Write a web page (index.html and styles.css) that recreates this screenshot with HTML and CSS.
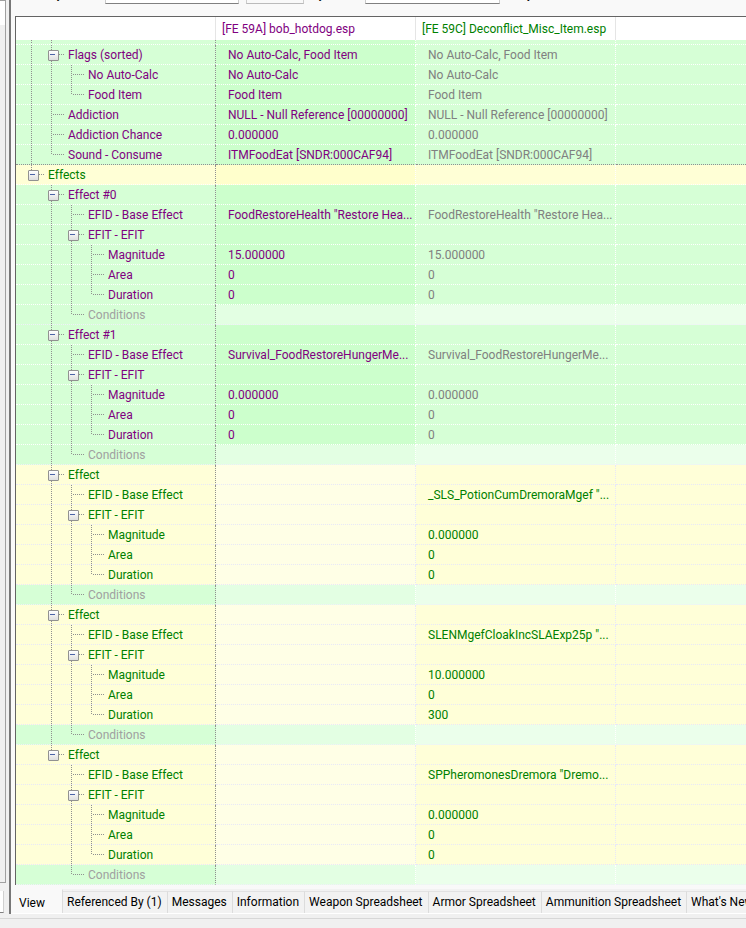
FILE: index.html
```html
<!DOCTYPE html>
<html>
<head>
	<meta charset="utf-8">
	<meta name="viewport" content="width=device-width, initial-scale=1">
	<title>View</title>
	<link rel="stylesheet" href="styles.css">
</head>
<body>
	<div class="window">
		<aside class="side">
			<div class="side_tree"><div class="side_head"></div></div>
			<div class="side_box"></div>
		</aside>
		<main class="main">
			<div class="toolbar">
				<label class="lab1" for="byName">by</label>
				<input class="box1" id="byName" type="text">
				<button class="box2" type="button" aria-label="Name options"></button>
				<label class="lab2" for="byValue">by</label>
				<input class="box3" id="byValue" type="text">
				<span class="lab3">y</span>
			</div>
			<div class="grid">
				<table>
					<colgroup><col class="c"><col class="c"><col class="c"><col></colgroup>
					<thead>
						<tr><th></th><th class="purple">[FE 59A] bob_hotdog.esp</th><th class="green">[FE 59C] Deconflict_Misc_Item.esp</th><th></th></tr>
					</thead>
					<tbody>
						<tr class="same cut"><td><div class="name"><i class="v"></i><i class="v"></i></div></td><td></td><td></td><td></td></tr>
						<tr class="same"><td><div class="name"><i class="v"></i><i class="t box"></i>Flags (sorted)</div></td><td>No Auto-Calc, Food Item</td><td>No Auto-Calc, Food Item</td><td></td></tr>
						<tr class="same"><td><div class="name"><i class="v"></i><i class="v"></i><i class="t"></i>No Auto-Calc</div></td><td>No Auto-Calc</td><td>No Auto-Calc</td><td></td></tr>
						<tr class="same"><td><div class="name"><i class="v"></i><i class="v"></i><i class="l"></i>Food Item</div></td><td>Food Item</td><td>Food Item</td><td></td></tr>
						<tr class="same"><td><div class="name"><i class="v"></i><i class="t"></i>Addiction</div></td><td>NULL - Null Reference [00000000]</td><td>NULL - Null Reference [00000000]</td><td></td></tr>
						<tr class="same"><td><div class="name"><i class="v"></i><i class="t"></i>Addiction Chance</div></td><td>0.000000</td><td>0.000000</td><td></td></tr>
						<tr class="same last"><td><div class="name"><i class="v"></i><i class="l"></i>Sound - Consume</div></td><td>ITMFoodEat [SNDR:000CAF94]</td><td>ITMFoodEat [SNDR:000CAF94]</td><td></td></tr>

						<tr class="group"><td><div class="name"><i class="l box"></i>Effects</div></td><td></td><td></td><td></td></tr>

						<tr class="same"><td><div class="name"><i></i><i class="t box"></i>Effect #0</div></td><td></td><td></td><td></td></tr>
						<tr class="same"><td><div class="name"><i></i><i class="v"></i><i class="t"></i>EFID - Base Effect</div></td><td>FoodRestoreHealth "Restore Hea...</td><td>FoodRestoreHealth "Restore Hea...</td><td></td></tr>
						<tr class="same"><td><div class="name"><i></i><i class="v"></i><i class="t box"></i>EFIT - EFIT</div></td><td></td><td></td><td></td></tr>
						<tr class="same"><td><div class="name"><i></i><i class="v"></i><i class="v"></i><i class="t"></i>Magnitude</div></td><td>15.000000</td><td>15.000000</td><td></td></tr>
						<tr class="same"><td><div class="name"><i></i><i class="v"></i><i class="v"></i><i class="t"></i>Area</div></td><td>0</td><td>0</td><td></td></tr>
						<tr class="same"><td><div class="name"><i></i><i class="v"></i><i class="v"></i><i class="l"></i>Duration</div></td><td>0</td><td>0</td><td></td></tr>
						<tr class="empty"><td><div class="name"><i></i><i class="v"></i><i class="l"></i>Conditions</div></td><td></td><td></td><td></td></tr>

						<tr class="same"><td><div class="name"><i></i><i class="t box"></i>Effect #1</div></td><td></td><td></td><td></td></tr>
						<tr class="same"><td><div class="name"><i></i><i class="v"></i><i class="t"></i>EFID - Base Effect</div></td><td>Survival_FoodRestoreHungerMe...</td><td>Survival_FoodRestoreHungerMe...</td><td></td></tr>
						<tr class="same"><td><div class="name"><i></i><i class="v"></i><i class="t box"></i>EFIT - EFIT</div></td><td></td><td></td><td></td></tr>
						<tr class="same"><td><div class="name"><i></i><i class="v"></i><i class="v"></i><i class="t"></i>Magnitude</div></td><td>0.000000</td><td>0.000000</td><td></td></tr>
						<tr class="same"><td><div class="name"><i></i><i class="v"></i><i class="v"></i><i class="t"></i>Area</div></td><td>0</td><td>0</td><td></td></tr>
						<tr class="same"><td><div class="name"><i></i><i class="v"></i><i class="v"></i><i class="l"></i>Duration</div></td><td>0</td><td>0</td><td></td></tr>
						<tr class="empty"><td><div class="name"><i></i><i class="v"></i><i class="l"></i>Conditions</div></td><td></td><td></td><td></td></tr>

						<tr class="added"><td><div class="name"><i></i><i class="t box"></i>Effect</div></td><td></td><td></td><td></td></tr>
						<tr class="added"><td><div class="name"><i></i><i class="v"></i><i class="t"></i>EFID - Base Effect</div></td><td></td><td>_SLS_PotionCumDremoraMgef "...</td><td></td></tr>
						<tr class="added"><td><div class="name"><i></i><i class="v"></i><i class="t box"></i>EFIT - EFIT</div></td><td></td><td></td><td></td></tr>
						<tr class="added"><td><div class="name"><i></i><i class="v"></i><i class="v"></i><i class="t"></i>Magnitude</div></td><td></td><td>0.000000</td><td></td></tr>
						<tr class="added"><td><div class="name"><i></i><i class="v"></i><i class="v"></i><i class="t"></i>Area</div></td><td></td><td>0</td><td></td></tr>
						<tr class="added"><td><div class="name"><i></i><i class="v"></i><i class="v"></i><i class="l"></i>Duration</div></td><td></td><td>0</td><td></td></tr>
						<tr class="empty"><td><div class="name"><i></i><i class="v"></i><i class="l"></i>Conditions</div></td><td></td><td></td><td></td></tr>

						<tr class="added"><td><div class="name"><i></i><i class="t box"></i>Effect</div></td><td></td><td></td><td></td></tr>
						<tr class="added"><td><div class="name"><i></i><i class="v"></i><i class="t"></i>EFID - Base Effect</div></td><td></td><td>SLENMgefCloakIncSLAExp25p "...</td><td></td></tr>
						<tr class="added"><td><div class="name"><i></i><i class="v"></i><i class="t box"></i>EFIT - EFIT</div></td><td></td><td></td><td></td></tr>
						<tr class="added"><td><div class="name"><i></i><i class="v"></i><i class="v"></i><i class="t"></i>Magnitude</div></td><td></td><td>10.000000</td><td></td></tr>
						<tr class="added"><td><div class="name"><i></i><i class="v"></i><i class="v"></i><i class="t"></i>Area</div></td><td></td><td>0</td><td></td></tr>
						<tr class="added"><td><div class="name"><i></i><i class="v"></i><i class="v"></i><i class="l"></i>Duration</div></td><td></td><td>300</td><td></td></tr>
						<tr class="empty"><td><div class="name"><i></i><i class="v"></i><i class="l"></i>Conditions</div></td><td></td><td></td><td></td></tr>

						<tr class="added"><td><div class="name"><i></i><i class="l box"></i>Effect</div></td><td></td><td></td><td></td></tr>
						<tr class="added"><td><div class="name"><i></i><i></i><i class="t"></i>EFID - Base Effect</div></td><td></td><td>SPPheromonesDremora "Dremo...</td><td></td></tr>
						<tr class="added"><td><div class="name"><i></i><i></i><i class="t box"></i>EFIT - EFIT</div></td><td></td><td></td><td></td></tr>
						<tr class="added"><td><div class="name"><i></i><i></i><i class="v"></i><i class="t"></i>Magnitude</div></td><td></td><td>0.000000</td><td></td></tr>
						<tr class="added"><td><div class="name"><i></i><i></i><i class="v"></i><i class="t"></i>Area</div></td><td></td><td>0</td><td></td></tr>
						<tr class="added"><td><div class="name"><i></i><i></i><i class="v"></i><i class="l"></i>Duration</div></td><td></td><td>0</td><td></td></tr>
						<tr class="empty"><td><div class="name"><i></i><i></i><i class="l"></i>Conditions</div></td><td></td><td></td><td></td></tr>
					</tbody>
				</table>
			</div>
			<nav class="tabs">
				<button type="button" class="active">View</button>
				<button type="button">Referenced By (1)</button>
				<button type="button">Messages</button>
				<button type="button">Information</button>
				<button type="button">Weapon Spreadsheet</button>
				<button type="button">Armor Spreadsheet</button>
				<button type="button">Ammunition Spreadsheet</button>
				<button type="button">What's New</button>
			</nav>
		</main>
	</div>
	<footer class="status"></footer>
</body>
</html>
```
FILE: styles.css
```css
* {
	box-sizing: border-box;
}

html,body {
	height: 100%;
	margin: 0;
	overflow: hidden;
}

body {
	display: flex;
	flex-direction: column;
	background: #f0f0f0;
	font-family: Roboto, "Open Sans", sans-serif;
	font-size: 12px;
	color: #000;
}

button,input {
	font: inherit;
	color: inherit;
	padding: 0;
	margin: 0;
	border-radius: 0;
}

.window {
	flex: 1;
	display: flex;
	min-height: 0;
}

/* left panel, only its right edge is in the window */
.side {
	width: 9px;
	flex: none;
	display: flex;
	flex-direction: column;
	gap: 8px;
	padding-right: 3px;
}
.side_tree {
	flex: 1;
	border-right: 1px solid #a0a0a0;
	border-bottom: 1px solid #a0a0a0;
}
.side_head {
	height: 25px;
	background: #fff;
	border-top: 1px solid #a0a0a0;
}
.side_box {
	height: 22px;
	margin: 0 2px 5px 0;
	background: #fff;
	border-bottom: 1px solid #808080;
	border-right: 1px solid #d0d0d0;
}

.main {
	flex: 1;
	min-width: 0;
	display: flex;
	flex-direction: column;
	background: #f9f9f9;
	border-left: 2px solid #777;
	margin-bottom: 4px;
}

/* toolbar is scrolled up, the lower edge of the fields stays visible */
.toolbar {
	display: flex;
	height: 34px;
	margin-top: -18px;
	padding-left: 39px;
	line-height: 24px;
	flex: none;
	overflow: hidden;
}
.toolbar input,.toolbar button {
	height: 22px;
	background: #fff;
	border: 1px solid #ccc;
	border-bottom-color: #808080;
}
.lab1 { width: 55px; }
.box1 { width: 134px; }
.toolbar .box2 {
	width: 58px;
	margin-left: 7px;
	background: #f9f9f9;
	border-bottom-color: #bbb;
}
.lab2 {
	width: 53px;
	margin-left: 8px;
	flex: none;
}
.box3 { width: 135px; }
.lab3 { margin-left: 27px; }

.grid {
	flex: 1;
	min-height: 0;
	overflow: hidden;
	margin-left: 4px;
	border-top: 1px solid #646464;
}

table {
	width: 100%;
	table-layout: fixed;
	border-spacing: 0;
	border-left: 1px solid #646464;
	background: #fff;
}
.c {
	width: 200px;
}

th {
	height: 23px;
	padding: 0 0 0 6px;
	border-right: 1px solid #e5e5e5;
	font-weight: normal;
	text-align: left;
	line-height: 22px;
	white-space: nowrap;
}
th:last-child {
	border-right: 0;
}
.purple { color: #800080; }
.green { color: #008000; }

td {
	height: 20px;
	padding: 1px 0 0 12px;
	border-right: 1px dotted #fff;
	border-bottom: 1px dotted #fff;
	line-height: 18px;
	white-space: nowrap;
}
td:first-child {
	padding: 0;
	border-right-color: #909090;
	line-height: 21px;
}
td:last-child {
	border-right: 0;
}
.cut td {
	height: 5px;
}

.same {
	color: #800080;
	background: #d6ffd6;
}
.same td:nth-child(2) { background: #ccffcc; }
.same td:nth-child(3) { color: #808080; }
.last td { border-bottom-color: #909090; }

.group {
	color: #008000;
	background: #ffffd6;
}
.group td:nth-child(2) { background: #ffffcc; }

.added {
	color: #008000;
	background: #ffffd8;
}
.added td { border-bottom-color: #e8e8f8; }
.added td:nth-child(2) { background: #ffffe6; }
.added td:nth-child(2),.added td:nth-child(3) { border-right-color: #e8e8f8; }

.empty {
	color: #a0a0a0;
	background: #ebffeb;
}
.empty td { border-bottom-color: #f0f0fa; }
.empty td:nth-child(1) { background: #d6ffd6; }
.empty td:nth-child(2) { background: #e3ffe3; }

/* tree lines */
.name {
	display: flex;
	height: 19px;
	padding-left: 6px;
}
.cut .name {
	height: 4px;
}
.name i {
	position: relative;
	width: 20px;
	flex: none;
}
.v::before,.t::before,.l::before {
	content: "";
	position: absolute;
	left: 9px;
	top: 0;
	bottom: 0;
	width: 1px;
	background: repeating-linear-gradient(#909090 0 1px, transparent 1px 2px);
}
.l::before {
	bottom: 9px;
}
.name .t,.name .l {
	width: 26px;
	background: repeating-linear-gradient(90deg, transparent 0 1px, #909090 1px 2px) 10px 9px / 12px 1px no-repeat;
}
.box::after {
	content: "";
	position: absolute;
	left: 6px;
	top: 5px;
	width: 9px;
	height: 9px;
	border: 1px solid #919191;
	border-radius: 1px;
	background: linear-gradient(#4b63a7, #4b63a7) 1px 3px / 5px 1px no-repeat, linear-gradient(#fff, #dedede);
}

.tabs {
	display: flex;
	flex: none;
	height: 25px;
	margin-top: 4px;
	overflow: hidden;
	background: #f2f2f2;
	border-bottom: 1px solid #fff;
}
.tabs button {
	flex: none;
	height: 22px;
	margin-top: 2px;
	padding: 0 5px 2px 4px;
	border: 0;
	border-top: 1px solid #e2e2e2;
	border-right: 1px solid #dcdcdc;
	background: #f2f2f2;
	line-height: 18px;
	white-space: nowrap;
}
.tabs .active {
	width: 52px;
	height: 24px;
	margin-top: 0;
	padding: 2px 0 0 8px;
	text-align: left;
	background: #f9f9f9;
	border-top-color: #f9f9f9;
}

.status {
	height: 10px;
	flex: none;
	border-top: 1px solid #d7d7d7;
}
```
